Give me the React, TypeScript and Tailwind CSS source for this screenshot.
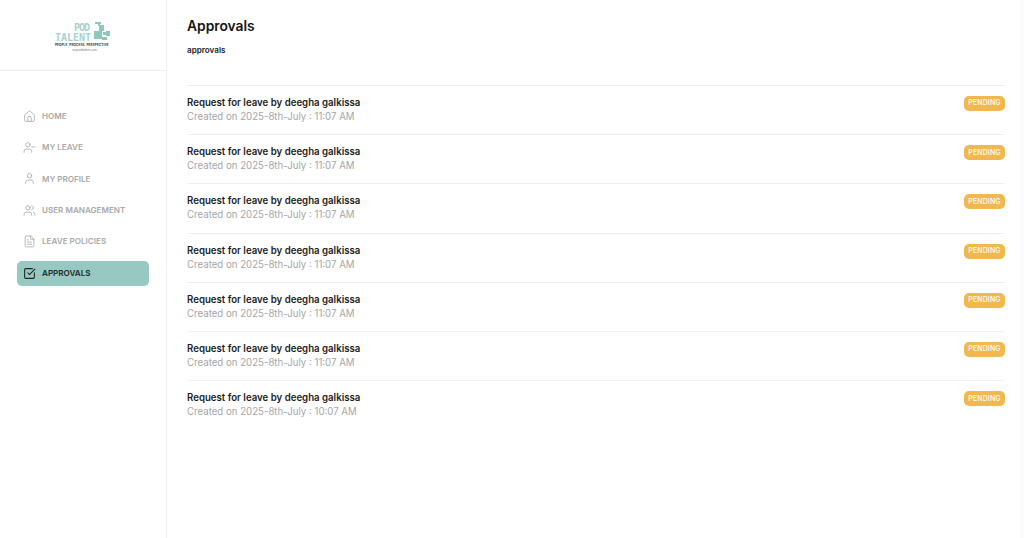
import React from 'react';
import { Home, UserMinus, User, Users, FileText, SquareCheckBig } from 'lucide-react';

const navItems = [
  { label: 'HOME', icon: Home },
  { label: 'MY LEAVE', icon: UserMinus },
  { label: 'MY PROFILE', icon: User },
  { label: 'USER MANAGEMENT', icon: Users },
  { label: 'LEAVE POLICIES', icon: FileText },
  { label: 'APPROVALS', icon: SquareCheckBig, active: true },
];

const requests = [
  '11:07 AM',
  '11:07 AM',
  '11:07 AM',
  '11:07 AM',
  '11:07 AM',
  '11:07 AM',
  '10:07 AM',
];

const Logo = () => (
  <div className="relative w-[56px] h-[34px]">
    <div className="absolute left-[19px] top-[5px] text-[10px] leading-[9px] tracking-[-1px] font-bold font-['DejaVu_Sans_Mono',monospace] text-[#a8d3cd]">POD</div>
    <div className="absolute left-0 top-[15px] text-[10px] leading-[9px] font-bold font-['DejaVu_Sans_Mono',monospace] text-[#a8d3cd]">TALENT</div>
    <svg className="absolute left-[38px] top-[4px]" width="18" height="20" viewBox="0 0 18 20" fill="#8fc7bf">
      <rect x="2" y="0" width="6" height="2" />
      <rect x="5" y="2" width="2" height="2" />
      <rect x="6" y="3" width="5" height="6" />
      <rect x="1" y="9" width="8" height="8" />
      <rect x="10" y="10" width="3" height="3" />
      <rect x="13" y="9" width="4" height="5" />
      <rect x="9" y="15" width="5" height="3" />
    </svg>
    <div className="absolute left-0 top-[25px] w-[54px] text-[3px] leading-[4px] font-bold tracking-[0.15px] whitespace-nowrap text-[#333333]">PEOPLE. PROCESS. PERSPECTIVE</div>
    <div className="absolute left-0 top-[30px] w-[42px] text-right text-[3px] leading-[4px] whitespace-nowrap text-[#777777]">mypodtalent.com</div>
  </div>
);

const App = () => {
  return (
    <div className="flex h-[538px] w-[1024px] overflow-hidden bg-white font-['Inter',sans-serif]">
      {/* Sidebar */}
      <aside className="w-[167px] shrink-0 border-r border-[#f0f0f0] flex flex-col">
        <div className="h-[71px] border-b border-[#f0f0f0] flex items-center justify-center">
          <Logo />
        </div>
        <nav className="flex flex-col gap-[6.4px] mt-[32px] px-[17px]">
          {navItems.map((item) => {
            const Icon = item.icon;
            return (
              <div
                key={item.label}
                className={`h-[25px] w-[132px] flex items-center gap-[6px] pl-[6px] pt-[1px] rounded-[5px] text-[8.1px] font-semibold ${item.active ? 'mt-[0.6px] bg-[#97c9c2] text-[#1c2826]' : 'text-[#a9a9a9]'}`}
              >
                <Icon className="w-[13px] h-[13px]" strokeWidth={item.active ? 2 : 1.5} />
                <span>{item.label}</span>
              </div>
            );
          })}
        </nav>
      </aside>

      {/* Main */}
      <main className="flex-1 pl-[20px] pr-[15px]">
        <h1 className="mt-[17px] text-[13.8px] leading-[19px] font-semibold text-[#141414]">Approvals</h1>
        <p className="mt-[8px] text-[8.1px] leading-[12px] font-semibold text-[#222222]">approvals</p>
        <div className="mt-[29px] border-t border-[#f0f0f0]">
          {requests.map((time, i) => (
            <div key={i} className="h-[49.22px] flex justify-between border-b border-[#f0f0f0] last:border-b-0">
              <div className="pt-[9px]">
                <div className="text-[9.66px] leading-[15px] font-semibold text-[#1c1c1c]">Request for leave by deegha galkissa</div>
                <div className="text-[9.66px] leading-[14px] text-[#a6a6a6]">Created on 2025-8th-July : {time}</div>
              </div>
              <div className="mt-[10px] h-[15px] w-[41px] rounded-[5px] bg-[#f2b84f] flex items-center justify-center text-[6.9px] font-medium tracking-[0.2px] text-white">PENDING</div>
            </div>
          ))}
        </div>
      </main>
      <div className="w-[4px] shrink-0 bg-[#fbfbfb]" />
    </div>
  );
};

export default App;
